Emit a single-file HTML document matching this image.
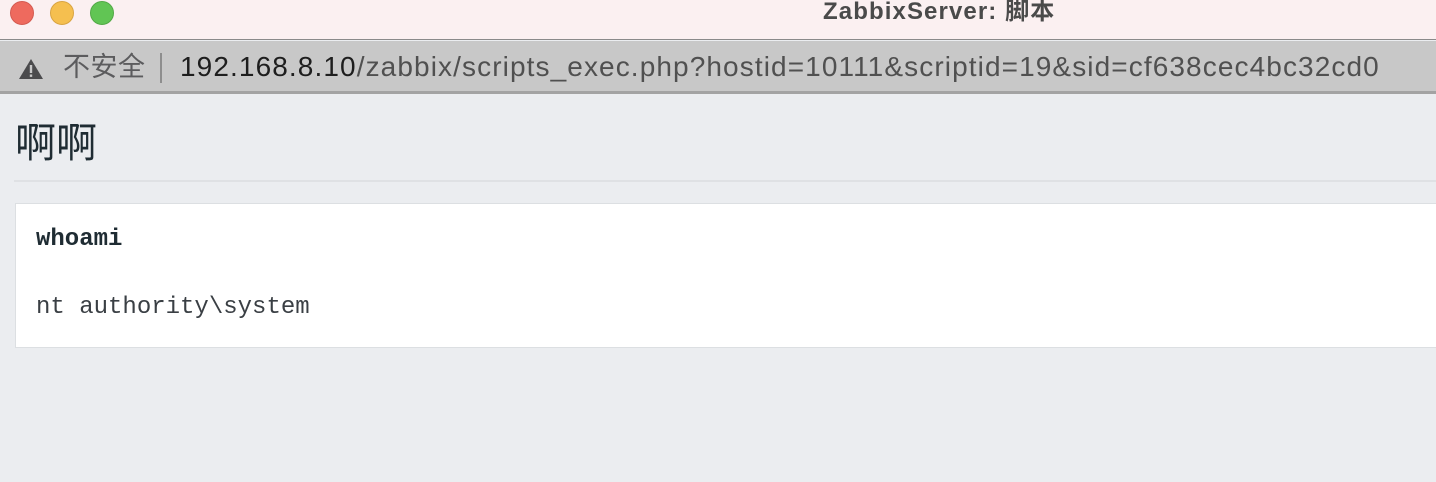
<!DOCTYPE html>
<html><head><meta charset="utf-8"><style>
*{margin:0;padding:0;box-sizing:border-box}
body{width:1436px;height:482px;overflow:hidden;background:#ebedf0;font-family:"Liberation Sans","Noto Sans CJK SC",sans-serif;position:relative}
.tb{position:absolute;left:0;top:0;width:1436px;height:40px;background:#fbf0f1;border-bottom:1px solid #8a8a8a}
.dot{position:absolute;top:1px;width:24px;height:24px;border-radius:50%}
.title{position:absolute;left:823px;top:-2px;font-size:24px;letter-spacing:1.1px;font-weight:bold;color:#4a4a4a;line-height:28px;white-space:nowrap}
.ab{position:absolute;left:0;top:41px;width:1436px;height:53px;background:#c8c8c8;border-bottom:3px solid #a3a3a3}
.ab .t{position:absolute;top:10px;font-size:28px;line-height:32px;white-space:nowrap}
h1{position:absolute;left:15px;top:119px;font-size:41px;font-weight:normal;color:#1f2c33;line-height:48px}
.hr{position:absolute;left:14px;top:180px;width:1422px;height:2px;background:#dfe1e4}
.box{position:absolute;left:15px;top:203px;width:1430px;height:145px;background:#fff;border:1px solid #dcdfe2}
.m{position:absolute;left:20px;font-family:"Liberation Mono",monospace;font-size:24px;color:#1f2c33;white-space:nowrap;line-height:28px}
</style></head><body>
<div class="tb">
<div class="dot" style="left:10px;background:#ee6a5e;border:1px solid #d45a50"></div>
<div class="dot" style="left:50px;background:#f5bf4f;border:1px solid #d9a441"></div>
<div class="dot" style="left:90px;background:#61c554;border:1px solid #52a946"></div>
<div class="title">ZabbixServer: 脚本</div>
</div>
<div class="ab">
<svg style="position:absolute;left:18px;top:17px" width="26" height="22" viewBox="0 0 26 22"><path d="M13 1 L25 21 L1 21 Z" fill="#4b4b4d"/><rect x="11.8" y="7" width="2.4" height="8" fill="#c8c8c8"/><rect x="11.8" y="16.5" width="2.4" height="2.4" fill="#c8c8c8"/></svg>
<div class="t" style="left:63px;color:#5c5c5e;font-size:27px;letter-spacing:0.5px">不安全</div>
<div style="position:absolute;left:160px;top:12px;width:2px;height:30px;background:#8e8e8e"></div>
<div class="t" style="left:180px;color:#1e1e1e;letter-spacing:1.1px">192.168.8.10<span style="color:#505050">/zabbix/scripts_exec.php?hostid=10111&amp;scriptid=19&amp;sid=cf638cec4bc32cd0</span></div>
</div>
<h1>啊啊</h1>
<div class="hr"></div>
<div class="box">
<div class="m" style="top:22px;font-weight:bold">whoami</div>
<div class="m" style="top:90px;color:#3a3f44">nt authority\system</div>
</div>
</body></html>
